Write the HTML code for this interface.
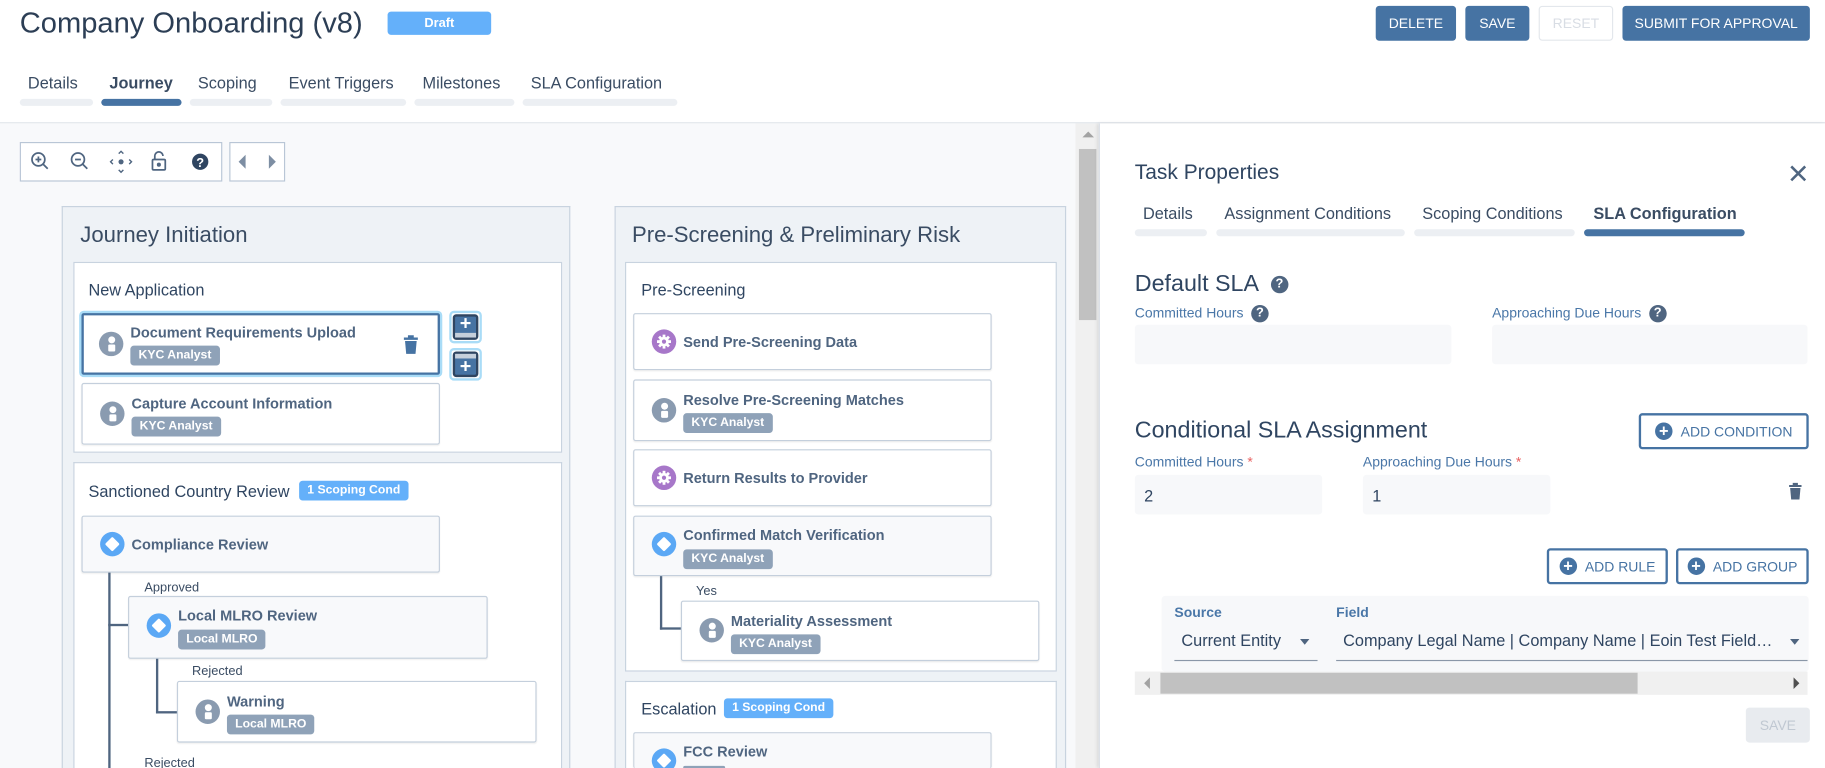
<!DOCTYPE html>
<html><head><meta charset="utf-8"><style>
*{box-sizing:border-box;margin:0;padding:0}
html,body{width:1825px;height:768px;overflow:hidden;background:#fff;font-family:"Liberation Sans",sans-serif;color:#2f4561}
#w{position:absolute;left:0;top:0;width:1568px;height:660px;transform:scale(1.16390);transform-origin:0 0;overflow:hidden}
.a{position:absolute}
.btn{position:absolute;background:#4673a3;color:#fff;font-size:12px;border-radius:3px;display:flex;align-items:center;justify-content:center}
.tl{position:absolute;font-size:14px;color:#3a4c63}
.bar{position:absolute;height:6px;border-radius:3px;background:#eceff3}
.col{position:absolute;background:#eef2f6;border:1px solid #c8d3df}
.ct{position:absolute;font-size:19px;color:#3a4c63}
.stg{position:absolute;background:#fff;border:1px solid #c8d3df}
.st{position:absolute;font-size:14px;color:#2f4561}
.task{position:absolute;background:#fff;border:1px solid #c4cfdc;border-radius:2px;box-shadow:0 1px 1px rgba(0,0,0,.06)}
.task.g{background:#f8f9fb}
.tt{position:absolute;left:42px;font-size:12.5px;font-weight:bold;color:#4f6580}
.bd{position:absolute;left:42px;height:17px;padding:0 7px;border-radius:3px;background:#8fa2b8;color:#fff;font-size:10.5px;font-weight:bold;line-height:17px}
.ic{position:absolute;left:15px;width:21px;height:21px;border-radius:50%}
.pi{background:#8a9bb0}
.pi:before{content:"";position:absolute;left:7.5px;top:4px;width:6px;height:6px;border-radius:50%;background:#fff}
.pi:after{content:"";position:absolute;left:7.5px;top:11px;width:6px;height:6px;background:#fff;border-radius:1px}
.di{background:#5ba8f5}
.di:after{content:"";position:absolute;left:6px;top:6px;width:9px;height:9px;background:#fff;transform:rotate(45deg);border-radius:1px}
.gi{background:#a777c9}
.lbl{position:absolute;font-size:11px;color:#3a4c63}
.ln{position:absolute;background:#4f6580}
.sc{position:absolute;height:17px;padding:0 7px;border-radius:3px;background:#64b0fa;color:#fff;font-size:10.5px;font-weight:bold;line-height:17px}
.fl{position:absolute;font-size:12px;color:#4a77a8}
.inp{position:absolute;background:#f7f8fa;border-radius:3px;font-size:14px;color:#2f4561;padding:10px 8px}
.q{display:inline-block;width:15px;height:15px;border-radius:50%;background:#4f6580;color:#fff;font-size:11px;font-weight:bold;text-align:center;line-height:15px;vertical-align:middle}
.ob{position:absolute;border:2px solid #4673a3;border-radius:3px;color:#4673a3;font-size:12px;display:flex;align-items:center;justify-content:center;background:#fff}
.pc{display:inline-block;width:15px;height:15px;border-radius:50%;background:#4673a3;color:#fff;font-size:14px;line-height:14px;text-align:center;margin-right:7px;font-weight:bold}
</style></head><body><div id="w">

<div class="a" style="left:17px;top:6px;font-size:25px;color:#2c3e55">Company Onboarding (v8)</div>
<div class="a" style="left:333px;top:10px;width:89px;height:20px;background:#64b0fa;border-radius:3px;color:#fff;font-size:11px;font-weight:bold;text-align:center;line-height:20px">Draft</div>

<div class="btn" style="left:1182px;top:5px;width:69px;height:30px">DELETE</div>
<div class="btn" style="left:1259px;top:5px;width:55px;height:30px">SAVE</div>
<div class="btn" style="left:1322px;top:5px;width:64px;height:30px;background:#fff;border:1px solid #e3e7ec;color:#d8dde4">RESET</div>
<div class="btn" style="left:1394px;top:5px;width:161px;height:30px">SUBMIT FOR APPROVAL</div>

<div class="tl" style="left:24px;top:63px">Details</div>
<div class="tl" style="left:94px;top:63px;font-weight:bold">Journey</div>
<div class="tl" style="left:170px;top:63px">Scoping</div>
<div class="tl" style="left:248px;top:63px">Event Triggers</div>
<div class="tl" style="left:363px;top:63px">Milestones</div>
<div class="tl" style="left:456px;top:63px">SLA Configuration</div>
<div class="bar" style="left:17px;top:85px;width:63px"></div>
<div class="bar" style="left:87px;top:85px;width:69px;background:#4673a3"></div>
<div class="bar" style="left:163px;top:85px;width:71px"></div>
<div class="bar" style="left:241px;top:85px;width:108px"></div>
<div class="bar" style="left:356px;top:85px;width:86px"></div>
<div class="bar" style="left:449px;top:85px;width:133px"></div>

<div class="a" style="left:0;top:105px;width:1568px;height:1px;background:#dfe4ea"></div>
<div class="a" style="left:0;top:106px;width:924px;height:554px;background:#f8f9fb"></div>
<div class="a" style="left:924px;top:106px;width:20px;height:554px;background:#f0f0f0"></div>
<div class="a" style="left:927px;top:128px;width:15px;height:147px;background:#c1c1c1"></div>
<div class="a" style="left:930px;top:113px;width:0;height:0;border:5px solid transparent;border-bottom:5px solid #a3a3a3;border-top:0"></div>

<!-- toolbar -->
<div class="a" style="left:17px;top:122px;width:174px;height:34px;background:#fff;border:1px solid #b9c6d6"></div>
<svg class="a" style="left:17px;top:122px" width="230" height="34" viewBox="0 0 230 34" fill="none" stroke="#4f6580" stroke-width="1.5">
<circle cx="16" cy="15" r="5.5"/><path d="M20 19l4 4M13.5 15h5M16 12.5v5"/>
<circle cx="50" cy="15" r="5.5"/><path d="M54 19l4 4M47.5 15h5"/>
<circle cx="87" cy="17" r="2.2" fill="#4f6580" stroke="none"/><path d="M85 10l2-2 2 2M85 24l2 2 2-2M80 15l-2 2 2 2M94 15l2 2-2 2" stroke-width="1.2"/>
<rect x="114" y="15" width="11" height="9" rx="1"/><path d="M116 15v-3a3.5 3.5 0 0 1 7 0"/><circle cx="119.5" cy="19.5" r="1" fill="#4f6580"/>
<circle cx="155" cy="17" r="7" fill="#2f4561" stroke="none"/>
<text x="155" y="21.5" font-size="11" font-weight="bold" fill="#fff" stroke="none" text-anchor="middle" font-family="Liberation Sans">?</text>
</svg>
<div class="a" style="left:197px;top:122px;width:48px;height:34px;background:#fff;border:1px solid #b9c6d6"></div>
<div class="a" style="left:205px;top:133px;border:6px solid transparent;border-right:6px solid #7d8ea3;border-left:0"></div>
<div class="a" style="left:231px;top:133px;border:6px solid transparent;border-left:6px solid #7d8ea3;border-right:0"></div>

<!-- Column 1 -->
<div class="col" style="left:53px;top:177px;width:437px;height:483px;border-bottom:0"></div>
<div class="ct" style="left:69px;top:192px">Journey Initiation</div>
<div class="stg" style="left:63px;top:225px;width:420px;height:164px"></div>
<div class="st" style="left:76px;top:241px">New Application</div>
<div class="task" style="left:70px;top:269px;width:308px;height:53px;border:2px solid #4673a3;box-shadow:0 0 0 2px #a9dcf7"><div class="ic pi" style="top:14px;left:13px"></div><div class="tt" style="top:8px;left:40px">Document Requirements Upload</div><div class="bd" style="top:26px;left:40px">KYC Analyst</div>
<svg class="a" style="left:274px;top:16px" width="14" height="18" viewBox="0 0 14 18"><path d="M1 3h12v2H1zM4.5 1h5v2h-5z" fill="#4673a3"/><path d="M2 6h10l-1 11H3z" fill="#4673a3"/></svg></div>
<div class="a" style="left:386px;top:267px;width:28px;height:28px;border:2px solid #a9dcf7;border-radius:4px;padding:1px"><div style="width:100%;height:100%;border:2px solid #2f4561;border-radius:3px;background:#4673a3;position:relative"><div style="position:absolute;left:0;right:0;bottom:0;height:4px;background:#c5cfdb"></div><div style="position:absolute;left:0;right:0;top:-4px;text-align:center;color:#fff;font-size:17px;font-weight:bold">+</div></div></div>
<div class="a" style="left:386px;top:299px;width:28px;height:28px;border:2px solid #a9dcf7;border-radius:4px;padding:1px"><div style="width:100%;height:100%;border:2px solid #2f4561;border-radius:3px;background:#4673a3;position:relative"><div style="position:absolute;left:0;right:0;top:0;height:4px;background:#c5cfdb"></div><div style="position:absolute;left:0;right:0;top:1px;text-align:center;color:#fff;font-size:17px;font-weight:bold">+</div></div></div>
<div class="task" style="left:70px;top:329px;width:308px;height:53px"><div class="ic pi" style="top:15px"></div><div class="tt" style="top:10px">Capture Account Information</div><div class="bd" style="top:28px">KYC Analyst</div></div>

<div class="stg" style="left:63px;top:397px;width:420px;height:263px;border-bottom:0"></div>
<div class="st" style="left:76px;top:414px">Sanctioned Country Review</div>
<div class="sc" style="left:257px;top:413px">1 Scoping Cond</div>
<div class="task g" style="left:70px;top:443px;width:308px;height:49px"><div class="ic di" style="top:13px"></div><div class="tt" style="top:17px">Compliance Review</div></div>
<div class="ln" style="left:93px;top:492px;width:2px;height:168px"></div>
<div class="ln" style="left:93px;top:536px;width:17px;height:2px"></div>
<div class="lbl" style="left:124px;top:499px">Approved</div>
<div class="task g" style="left:110px;top:512px;width:309px;height:54px"><div class="ic di" style="top:14px"></div><div class="tt" style="top:9px">Local MLRO Review</div><div class="bd" style="top:28px">Local MLRO</div></div>
<div class="ln" style="left:134px;top:566px;width:2px;height:47px"></div>
<div class="ln" style="left:134px;top:611px;width:18px;height:2px"></div>
<div class="lbl" style="left:165px;top:571px">Rejected</div>
<div class="task" style="left:152px;top:585px;width:309px;height:53px"><div class="ic pi" style="top:15px"></div><div class="tt" style="top:10px">Warning</div><div class="bd" style="top:28px">Local MLRO</div></div>
<div class="lbl" style="left:124px;top:650px">Rejected</div>

<!-- Column 2 -->
<div class="col" style="left:528px;top:177px;width:388px;height:483px;border-bottom:0"></div>
<div class="ct" style="left:543px;top:192px">Pre-Screening &amp; Preliminary Risk</div>
<div class="stg" style="left:537px;top:225px;width:371px;height:352px"></div>
<div class="st" style="left:551px;top:241px">Pre-Screening</div>
<div class="task" style="left:544px;top:269px;width:308px;height:49px"><div class="ic gi" style="top:13px"></div>
<svg class="a" style="left:15px;top:13px" width="21" height="21" viewBox="0 0 21 21"><g fill="#fff"><circle cx="10.5" cy="10.5" r="4.2"/><rect x="9.3" y="4.5" width="2.4" height="12"/><rect x="4.5" y="9.3" width="12" height="2.4"/><rect x="9.3" y="4.5" width="2.4" height="12" transform="rotate(45 10.5 10.5)"/><rect x="9.3" y="4.5" width="2.4" height="12" transform="rotate(-45 10.5 10.5)"/></g><circle cx="10.5" cy="10.5" r="1.8" fill="#a777c9"/></svg>
<div class="tt" style="top:17px">Send Pre-Screening Data</div></div>
<div class="task" style="left:544px;top:326px;width:308px;height:53px"><div class="ic pi" style="top:15px"></div><div class="tt" style="top:10px">Resolve Pre-Screening Matches</div><div class="bd" style="top:28px">KYC Analyst</div></div>
<div class="task" style="left:544px;top:386px;width:308px;height:49px"><div class="ic gi" style="top:13px"></div>
<svg class="a" style="left:15px;top:13px" width="21" height="21" viewBox="0 0 21 21"><g fill="#fff"><circle cx="10.5" cy="10.5" r="4.2"/><rect x="9.3" y="4.5" width="2.4" height="12"/><rect x="4.5" y="9.3" width="12" height="2.4"/><rect x="9.3" y="4.5" width="2.4" height="12" transform="rotate(45 10.5 10.5)"/><rect x="9.3" y="4.5" width="2.4" height="12" transform="rotate(-45 10.5 10.5)"/></g><circle cx="10.5" cy="10.5" r="1.8" fill="#a777c9"/></svg>
<div class="tt" style="top:17px">Return Results to Provider</div></div>
<div class="task g" style="left:544px;top:443px;width:308px;height:52px"><div class="ic di" style="top:13px"></div><div class="tt" style="top:9px">Confirmed Match Verification</div><div class="bd" style="top:28px">KYC Analyst</div></div>
<div class="ln" style="left:567px;top:495px;width:2px;height:46px"></div>
<div class="ln" style="left:567px;top:539px;width:18px;height:2px"></div>
<div class="lbl" style="left:598px;top:502px">Yes</div>
<div class="task" style="left:585px;top:516px;width:308px;height:52px"><div class="ic pi" style="top:14px"></div><div class="tt" style="top:10px">Materiality Assessment</div><div class="bd" style="top:28px">KYC Analyst</div></div>
<div class="stg" style="left:537px;top:585px;width:371px;height:75px;border-bottom:0"></div>
<div class="st" style="left:551px;top:601px">Escalation</div>
<div class="sc" style="left:622px;top:600px">1 Scoping Cond</div>
<div class="task g" style="left:544px;top:629px;width:308px;height:31px;border-bottom:0"><div class="ic di" style="top:13px"></div><div class="tt" style="top:9px">FCC Review</div><div class="bd" style="top:28px;width:36px;height:3px"></div></div>

<!-- Right panel -->
<div class="a" style="left:944px;top:106px;width:624px;height:554px;background:#fff;border-left:1px solid #d8dde4;box-shadow:-1px 0 3px rgba(0,0,0,.12)"></div>
<div class="a" style="left:975px;top:138px;font-size:18px;color:#2f4561">Task Properties</div>
<svg class="a" style="left:1537px;top:141px" width="16" height="16" viewBox="0 0 16 16"><path d="M2 2l12 12M14 2L2 14" stroke="#4f6580" stroke-width="2.2"/></svg>
<div class="tl" style="left:982px;top:175px;font-size:14px">Details</div>
<div class="tl" style="left:1052px;top:175px">Assignment Conditions</div>
<div class="tl" style="left:1222px;top:175px">Scoping Conditions</div>
<div class="tl" style="left:1369px;top:175px;font-weight:bold">SLA Configuration</div>
<div class="bar" style="left:975px;top:197px;width:62px"></div>
<div class="bar" style="left:1045px;top:197px;width:162px"></div>
<div class="bar" style="left:1215px;top:197px;width:138px"></div>
<div class="bar" style="left:1361px;top:197px;width:138px;background:#4673a3"></div>

<div class="a" style="left:975px;top:233px;font-size:20px;color:#2f4561">Default SLA &nbsp;<span class="q">?</span></div>
<div class="fl" style="left:975px;top:262px">Committed Hours &nbsp;<span class="q">?</span></div>
<div class="fl" style="left:1282px;top:262px">Approaching Due Hours &nbsp;<span class="q">?</span></div>
<div class="inp" style="left:975px;top:279px;width:272px;height:34px"></div>
<div class="inp" style="left:1282px;top:279px;width:271px;height:34px"></div>

<div class="a" style="left:975px;top:359px;font-size:20px;color:#2f4561">Conditional SLA Assignment</div>
<div class="ob" style="left:1408px;top:355px;width:146px;height:31px"><span class="pc">+</span>ADD CONDITION</div>
<div class="fl" style="left:975px;top:390px">Committed Hours <span style="color:#e86060">*</span></div>
<div class="fl" style="left:1171px;top:390px">Approaching Due Hours <span style="color:#e86060">*</span></div>
<div class="inp" style="left:975px;top:408px;width:161px;height:34px">2</div>
<div class="inp" style="left:1171px;top:408px;width:161px;height:34px">1</div>
<svg class="a" style="left:1536px;top:414px" width="13" height="16" viewBox="0 0 14 18"><path d="M1 3h12v2H1zM4.5 1h5v2h-5z" fill="#4f6580"/><path d="M2 6h10l-1 11H3z" fill="#4f6580"/></svg>

<div class="ob" style="left:1329px;top:471px;width:104px;height:31px"><span class="pc">+</span>ADD RULE</div>
<div class="ob" style="left:1440px;top:471px;width:114px;height:31px"><span class="pc">+</span>ADD GROUP</div>

<div class="a" style="left:998px;top:512px;width:556px;height:65px;background:#f7f8fa;border-radius:3px"></div>
<div class="fl" style="left:1009px;top:519px;font-weight:bold">Source</div>
<div class="fl" style="left:1148px;top:519px;font-weight:bold">Field</div>
<div class="a" style="left:1015px;top:542px;font-size:14px;color:#2f4561">Current Entity</div>
<div class="a" style="left:1117px;top:549px;border:4px solid transparent;border-top:5px solid #4f6580;border-bottom:0"></div>
<div class="a" style="left:1009px;top:567px;width:123px;height:1px;background:#8a97a8"></div>
<div class="a" style="left:1154px;top:542px;font-size:14px;color:#2f4561;white-space:nowrap;width:372px;overflow:hidden;text-overflow:ellipsis">Company Legal Name | Company Name | Eoin Test Field | Legal Name</div>
<div class="a" style="left:1538px;top:549px;border:4px solid transparent;border-top:5px solid #4f6580;border-bottom:0"></div>
<div class="a" style="left:1148px;top:567px;width:405px;height:1px;background:#8a97a8"></div>

<div class="a" style="left:975px;top:577px;width:578px;height:20px;background:#f0f0f0"></div>
<div class="a" style="left:997px;top:578px;width:410px;height:18px;background:#c1c1c1"></div>
<div class="a" style="left:983px;top:582px;border:5px solid transparent;border-right:5px solid #a3a3a3;border-left:0"></div>
<div class="a" style="left:1541px;top:582px;border:5px solid transparent;border-left:5px solid #505050;border-right:0"></div>

<div class="btn" style="left:1500px;top:608px;width:55px;height:30px;background:#e8ebef;color:#c0c8d2;font-size:12px">SAVE</div>

</div></body></html>
